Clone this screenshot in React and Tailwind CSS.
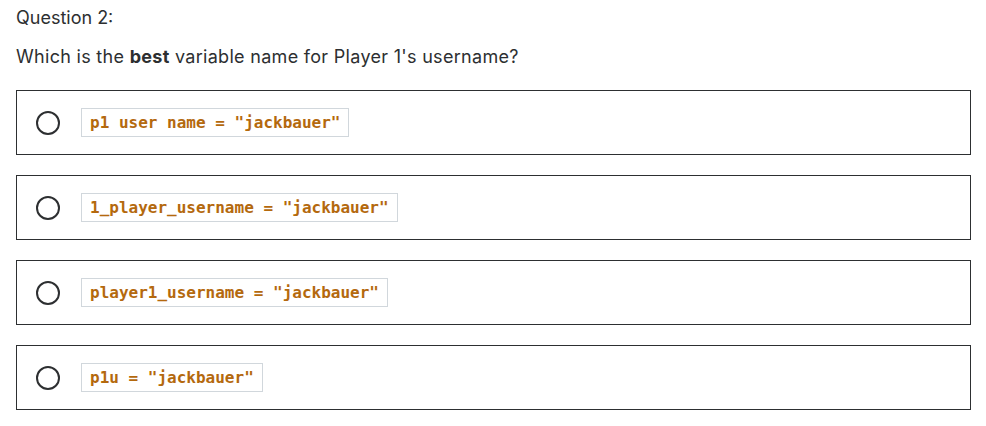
import React from 'react'

const options = [
  'p1 user name = "jackbauer"',
  '1_player_username = "jackbauer"',
  'player1_username = "jackbauer"',
  'p1u = "jackbauer"'
]

const Option = ({ code }) => (
  <label className="flex items-center h-[65px] border border-[#2d2f31] pl-[19px] pr-4 cursor-pointer">
    <span className="w-6 h-6 rounded-full border-2 border-[#2d2f31] shrink-0" />
    <span className="ml-[21px] h-[29px] flex items-center px-[8px] border border-[#d1d7dc] bg-white text-[16px] font-bold text-[#b4690e] font-['DejaVu_Sans_Mono',monospace] whitespace-pre">
      {code}
    </span>
  </label>
)

export default function App () {
  return (
    <div className="bg-white min-h-[426px] pl-4 pr-[15px] pt-[5px] text-[#2d2f31] font-['Inter',sans-serif]">
      <p className="text-[18px] leading-[26px]">Question 2:</p>
      <p className="text-[18px] leading-[26px] mt-[13px] tracking-[0.3px]">
        Which is the <strong className="font-bold">best</strong> variable name for Player 1's username?
      </p>
      <div className="mt-[20px] flex flex-col gap-5">
        {options.map((code) => (
          <Option key={code} code={code} />
        ))}
      </div>
    </div>
  )
}
